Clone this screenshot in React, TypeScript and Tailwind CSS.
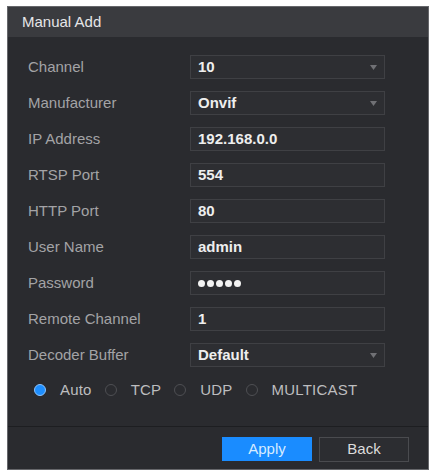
import React from "react";

const font = { fontFamily: '"Liberation Sans", Arial, sans-serif' };

type Row = { label: string; value: string; select?: boolean; password?: boolean };

const rows: Row[] = [
  { label: "Channel", value: "10", select: true },
  { label: "Manufacturer", value: "Onvif", select: true },
  { label: "IP Address", value: "192.168.0.0" },
  { label: "RTSP Port", value: "554" },
  { label: "HTTP Port", value: "80" },
  { label: "User Name", value: "admin" },
  { label: "Password", value: "", password: true },
  { label: "Remote Channel", value: "1" },
  { label: "Decoder Buffer", value: "Default", select: true },
];

function Radio({ checked, label }: { checked?: boolean; label: string }) {
  return (
    <div className="flex items-center gap-[14px]">
      {checked ? (
        <span className="w-[12px] h-[12px] rounded-full bg-[#1e8fff] border-[1.5px] border-[#8cc4ff]" />
      ) : (
        <span className="w-[12px] h-[12px] rounded-full border border-[#4e4f53]" />
      )}
      <span className="text-[15px] text-[#bdbdbf] tracking-[0.2px]">{label}</span>
    </div>
  );
}

export default function App() {
  return (
    <div className="w-[431px] h-[473px] bg-white pt-[6px] pl-[7px]" style={font}>
      <div className="w-[422px] h-[464px] flex flex-col bg-[#2a2b2f] border border-[#66676b]">
        <div className="h-[30px] bg-[#3a3b3f] flex items-center pl-[14px] text-[15px] text-[#e6e6e8]">
          Manual Add
        </div>
        <div className="flex flex-col gap-[12px] pt-[18px] pl-[20px]">
          {rows.map((r) => (
            <div key={r.label} className="flex items-center h-[24px]">
              <div className="w-[162px] text-[15px] text-[#a3a3a6]">{r.label}</div>
              <div className="w-[195px] h-[24px] bg-[#2d2e32] border border-[#3f4044] flex items-center justify-between pl-[7px] pr-[7px]">
                {r.password ? (
                  <span className="flex gap-[2px]">
                    {[0, 1, 2, 3, 4].map((i) => (
                      <span key={i} className="w-[7px] h-[7px] rounded-full bg-[#f2f2f2]" />
                    ))}
                  </span>
                ) : (
                  <span className="text-[15px] font-bold text-[#eeeeee]">{r.value}</span>
                )}
                {r.select && (
                  <svg width="7" height="5" viewBox="0 0 7 5">
                    <path d="M0 0 L7 0 L3.5 5 Z" fill="#707175" />
                  </svg>
                )}
              </div>
            </div>
          ))}
          <div className="flex items-center h-[24px] pl-[6px] gap-[13px] mt-[-1px]">
            <Radio checked label="Auto" />
            <Radio label="TCP" />
            <Radio label="UDP" />
            <Radio label="MULTICAST" />
          </div>
        </div>
        <div className="flex-1" />
        <div className="border-t border-[#1d1e21] h-[43px] flex items-start justify-end gap-[7px] pt-[10px] pr-[19px]">
          <button className="w-[90px] h-[24px] bg-[#1a8cff] text-[15px] text-[#d6ebff]">Apply</button>
          <button className="w-[90px] h-[25px] bg-[#2c2d31] border border-[#4a4b4f] text-[15px] text-[#dcdcdc]">
            Back
          </button>
        </div>
      </div>
    </div>
  );
}
